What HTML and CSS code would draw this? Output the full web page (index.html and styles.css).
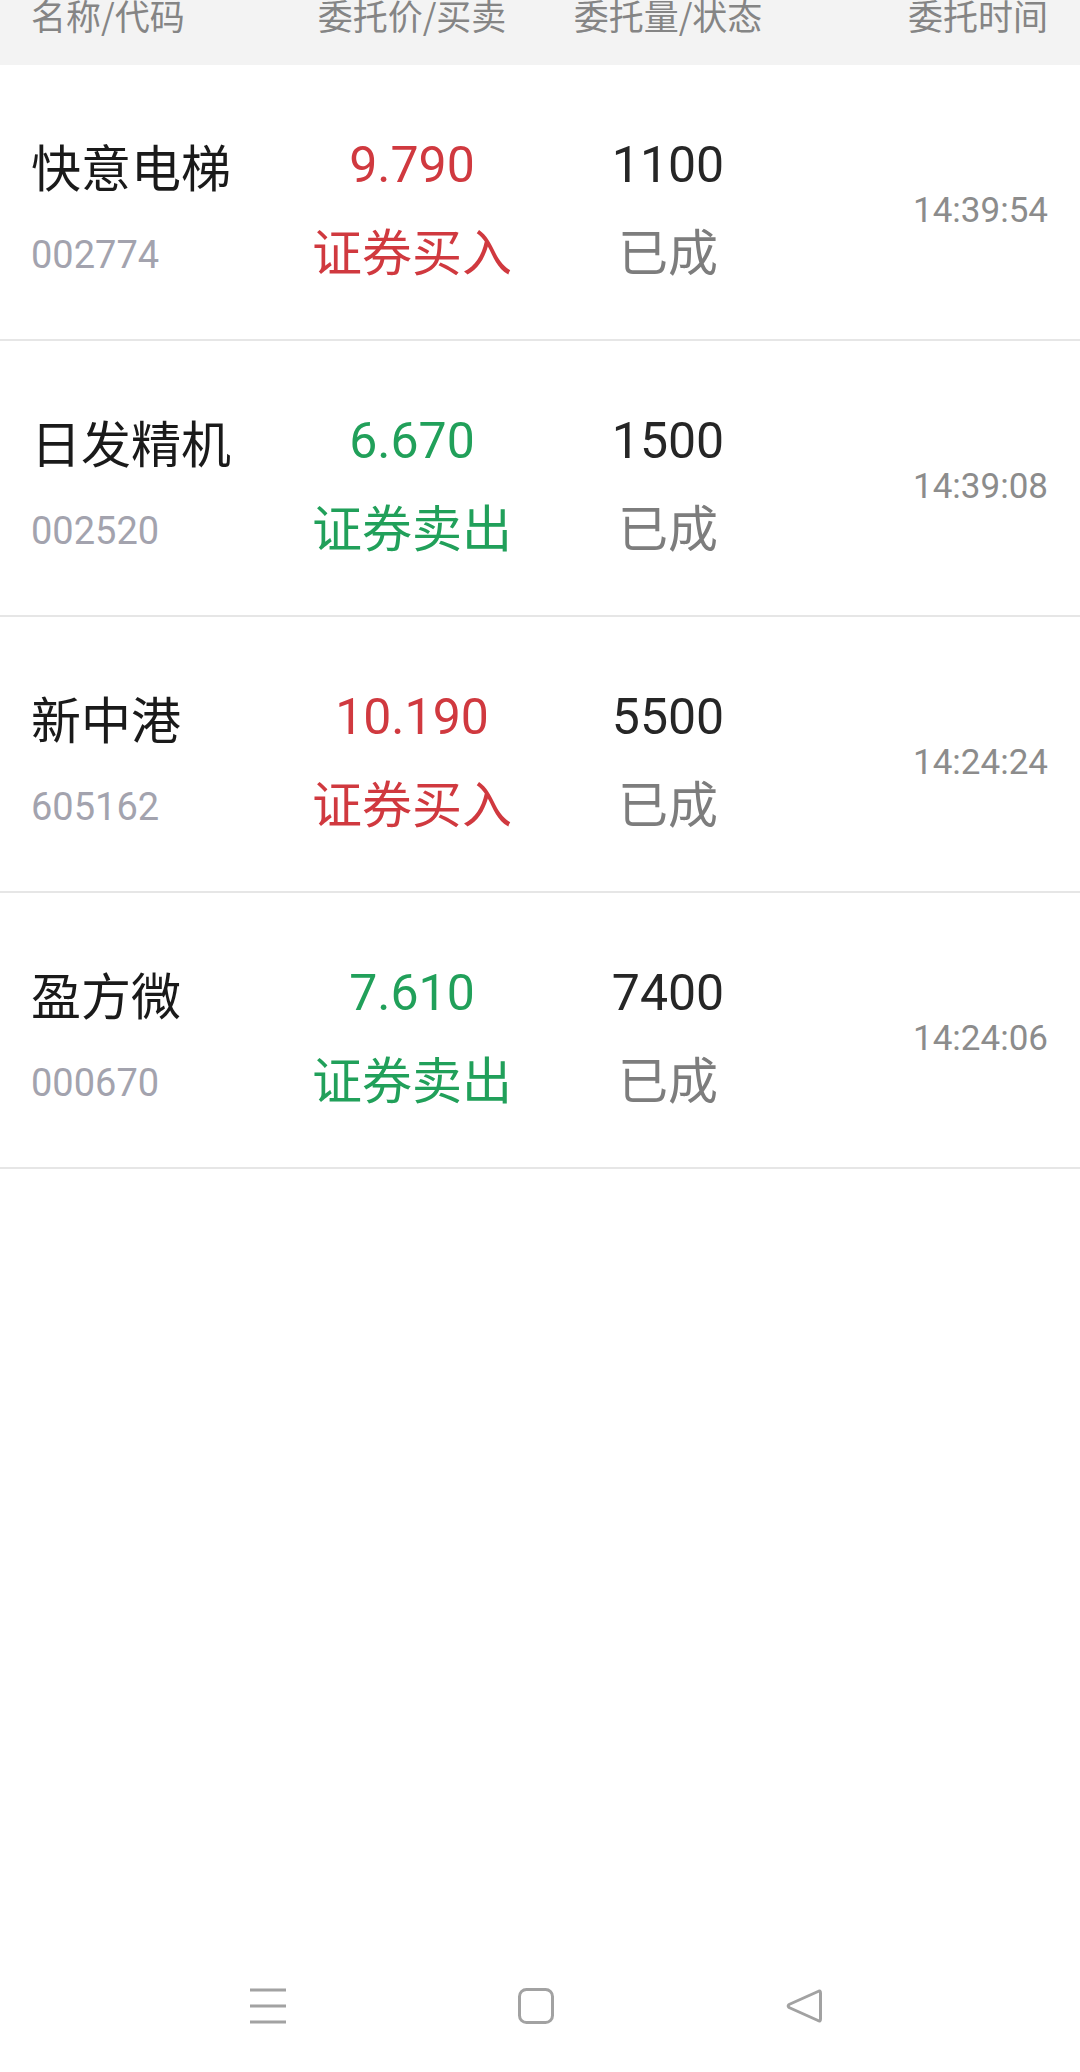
FILE: index.html
```html
<!DOCTYPE html>
<html lang="zh-CN">
<head>
<meta charset="utf-8">
<title>委托</title>
<link rel="stylesheet" href="styles.css">
</head>
<body>
<div class="page">
  <div class="thead">
    <div class="th th-name">名称/代码</div>
    <div class="th th-mid">委托价/买卖</div>
    <div class="th th-mid">委托量/状态</div>
    <div class="th th-time">委托时间</div>
  </div>

  <div class="list">
    <div class="row">
      <div class="cell c-name"><span class="main">快意电梯</span><span class="code">002774</span></div>
      <div class="cell c-mid"><span class="num red">9.790</span><span class="sub red">证券买入</span></div>
      <div class="cell c-mid"><span class="num">1100</span><span class="sub grey">已成</span></div>
      <div class="cell c-time">14:39:54</div>
    </div>
    <div class="row">
      <div class="cell c-name"><span class="main">日发精机</span><span class="code">002520</span></div>
      <div class="cell c-mid"><span class="num green">6.670</span><span class="sub green">证券卖出</span></div>
      <div class="cell c-mid"><span class="num">1500</span><span class="sub grey">已成</span></div>
      <div class="cell c-time">14:39:08</div>
    </div>
    <div class="row">
      <div class="cell c-name"><span class="main">新中港</span><span class="code">605162</span></div>
      <div class="cell c-mid"><span class="num red">10.190</span><span class="sub red">证券买入</span></div>
      <div class="cell c-mid"><span class="num">5500</span><span class="sub grey">已成</span></div>
      <div class="cell c-time">14:24:24</div>
    </div>
    <div class="row">
      <div class="cell c-name"><span class="main">盈方微</span><span class="code">000670</span></div>
      <div class="cell c-mid"><span class="num green">7.610</span><span class="sub green">证券卖出</span></div>
      <div class="cell c-mid"><span class="num">7400</span><span class="sub grey">已成</span></div>
      <div class="cell c-time">14:24:06</div>
    </div>
  </div>

  <div class="spacer"></div>

  <div class="navbar">
    <svg class="nav-icon" width="36" height="36" viewBox="0 0 36 36">
      <line x1="0" y1="2" x2="36" y2="2" />
      <line x1="0" y1="18" x2="36" y2="18" />
      <line x1="0" y1="34" x2="36" y2="34" />
    </svg>
    <svg class="nav-icon" width="36" height="36" viewBox="0 0 36 36">
      <rect x="1.5" y="1.5" width="33" height="33" rx="7" ry="7" />
    </svg>
    <svg class="nav-icon" width="36" height="36" viewBox="0 0 36 36">
      <path d="M32 3.5 Q34.5 2 34.5 5 L34.5 31 Q34.5 34 32 32.5 L3 19.5 Q1.5 18 3 16.5 Z" />
    </svg>
  </div>
</div>
</body>
</html>
```

FILE: styles.css
```css
* {
  box-sizing: border-box;
}

html, body {
  margin: 0;
  padding: 0;
  background: #ffffff;
}

body {
  font-family: Roboto, "Noto Sans CJK SC", sans-serif;
}

.page {
  min-height: 2072px;
  display: flex;
  flex-direction: column;
}

.thead {
  height: 65px;
  background: #f3f3f3;
  display: grid;
  grid-template-columns: 261px 240px 272px 1fr;
  padding: 0 32px 0 31px;
  align-items: start;
}

.th {
  font-size: 35px;
  line-height: 30px;
  color: #858585;
  white-space: nowrap;
  font-family: "Noto Sans CJK SC", sans-serif;
}

.th-mid {
  text-align: center;
}

.th-time {
  text-align: right;
}

.row {
  display: grid;
  grid-template-columns: 261px 240px 272px 1fr;
  padding: 58px 32px 48px 31px;
  border-bottom: 2px solid #e6e6e6;
  align-items: center;
}

.cell {
  display: flex;
  flex-direction: column;
  white-space: nowrap;
}

.c-mid {
  align-items: center;
}

.main, .sub, .num {
  font-size: 50px;
  line-height: 84px;
  height: 84px;
}

.main, .sub {
  font-family: "Noto Sans CJK SC", sans-serif;
}

.main {
  color: #1a1a1a;
}

.num {
  color: #262626;
}

.code {
  font-size: 38px;
  line-height: 84px;
  height: 84px;
  padding-top: 6px;
  color: #a3a3ae;
}

.red {
  color: #d0393f;
}

.green {
  color: #21a05a;
}

.grey {
  color: #7d7d7d;
}

.c-time {
  text-align: right;
  font-size: 35px;
  color: #8c8c8c;
  padding-top: 6px;
}

.spacer {
  flex: 1;
}

.navbar {
  height: 132px;
  display: flex;
  justify-content: center;
  align-items: center;
  gap: 232px;
  padding-right: 8px;
}

.nav-icon {
  fill: none;
  stroke: #a2a2a2;
  stroke-width: 3;
  stroke-linejoin: round;
  stroke-linecap: butt;
}
```
